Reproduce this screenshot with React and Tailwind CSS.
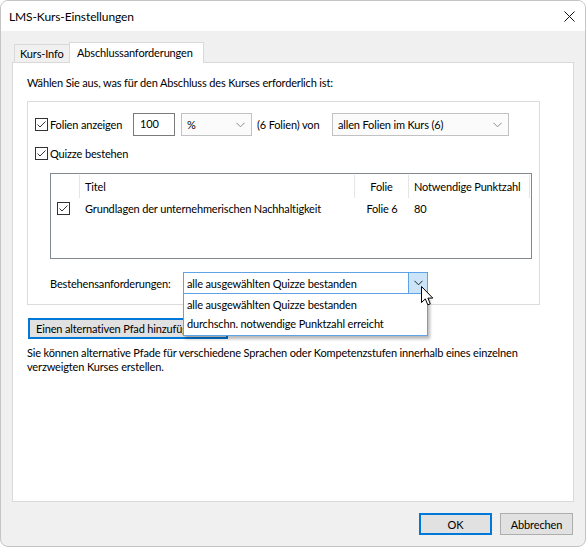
import React from "react";

function Check({ className = "" }) {
  return (
    <span
      className={`w-[13px] h-[13px] border border-[#333333] bg-white flex items-center justify-center shrink-0 ${className}`}
    >
      <svg width="11" height="11" viewBox="0 0 11 11">
        <path d="M1.5 5.5 L4 8 L9.5 2.5" fill="none" stroke="#333333" strokeWidth="1" />
      </svg>
    </span>
  );
}

function Chevron({ color = "#8a8a8a" }) {
  return (
    <svg width="9" height="6" viewBox="0 0 9 6">
      <path d="M0.5 0.8 L4.5 4.8 L8.5 0.8" fill="none" stroke={color} strokeWidth="1" />
    </svg>
  );
}

function Select({ value, width }) {
  return (
    <div
      className={`${width} h-[23px] border border-[#c2c2c2] bg-[#fbfbfb] flex items-center justify-between pl-[5px] pr-[6px]`}
    >
      <span>{value}</span>
      <Chevron />
    </div>
  );
}

export default function App() {
  return (
    <div className="w-[586px] h-[547px] bg-white">
      <div className="w-[586px] h-[547px] rounded-[8px] border border-[#c4c4c4] bg-[#f0f0f0] overflow-hidden flex flex-col relative text-[11px] tracking-[-0.15px] leading-[15px] text-black font-['Lato',sans-serif]">
        {/* Title bar */}
        <div className="h-[30px] bg-white flex items-center justify-between pl-[8px] pr-[10px] shrink-0">
          <span className="text-[12px] tracking-[-0.1px]">LMS-Kurs-Einstellungen</span>
          <svg width="11" height="11" viewBox="0 0 11 11">
            <path d="M0.5 0.5 L10.5 10.5 M10.5 0.5 L0.5 10.5" stroke="#111" strokeWidth="1" />
          </svg>
        </div>

        <div className="flex-1 flex flex-col px-[11px] pt-[11px]">
          {/* Tabs */}
          <div className="flex items-end h-[20px] pl-[2px]">
            <div className="h-[18px] w-[56px] border border-b-0 border-[#d9d9d9] bg-[#f0f0f0] flex items-center pl-[5px]">
              Kurs-Info
            </div>
            <div className="h-[21px] w-[135px] -ml-px -mb-px relative z-10 bg-white border border-b-0 border-[#d9d9d9] flex items-center pl-[7px] pb-[2px]">
              Abschlussanforderungen
            </div>
          </div>

          {/* Panel */}
          <div className="h-[440px] bg-white border border-[#d9d9d9] pl-[14px] pt-[12px] flex flex-col">
            <p>Wählen Sie aus, was für den Abschluss des Kurses erforderlich ist:</p>

            {/* Group box */}
            <div className="mt-[11px] w-[513px] h-[204px] border border-[#dcdcdc] pl-[7px] pt-[11px] flex flex-col">
              <div className="flex items-center h-[23px]">
                <Check />
                <span className="ml-[2px] w-[83px]">Folien anzeigen</span>
                <div className="w-[42px] h-[23px] border border-[#7a7a7a] bg-white pl-[6px] pt-[2px]">100</div>
                <Select value="%" width="ml-[6px] w-[71px]" />
                <span className="ml-[5px] w-[75px]">(6 Folien) von</span>
                <Select value="allen Folien im Kurs (6)" width="w-[177px]" />
              </div>

              <div className="flex items-center h-[16px] mt-[9px]">
                <Check />
                <span className="ml-[2px]">Quizze bestehen</span>
              </div>

              {/* List view */}
              <div className="ml-[15px] mt-[12px] w-[482px] h-[86px] border border-[#828790] bg-white flex flex-col whitespace-nowrap">
                <div className="flex h-[25px] items-stretch">
                  <div className="w-[29px] border-r border-[#e5e5e5] my-[1px]" />
                  <div className="w-[275px] border-r border-[#e5e5e5] pl-[5px] flex items-center my-[1px]">Titel</div>
                  <div className="w-[54px] border-r border-[#e5e5e5] flex items-center justify-center my-[1px]">Folie</div>
                  <div className="w-[121px] border-r border-[#e5e5e5] pl-[5px] flex items-center my-[1px]">Notwendige Punktzahl</div>
                </div>
                <div className="flex h-[18px] items-center">
                  <div className="w-[29px] pl-[6px]">
                    <Check />
                  </div>
                  <div className="w-[275px] pl-[5px]">Grundlagen der unternehmerischen Nachhaltigkeit</div>
                  <div className="w-[54px] text-center">Folie 6</div>
                  <div className="w-[121px] pl-[5px]">80</div>
                </div>
              </div>

              {/* Bestehensanforderungen */}
              <div className="ml-[15px] mt-[13px] flex items-center h-[22px] whitespace-nowrap">
                <span className="w-[133px]">Bestehensanforderungen:</span>
                <div className="relative w-[245px] h-[22px] border border-[#5ea3e6] bg-white flex items-center z-20">
                  <span className="flex-1 pl-[3px]">alle ausgewählten Quizze bestanden</span>
                  <div className="w-[19px] h-full border-l border-[#5ea3e6] bg-[#cce4f7] flex items-center justify-center">
                    <Chevron color="#222" />
                  </div>
                  {/* Dropdown list */}
                  <div className="absolute left-[-1px] top-[21px] w-[245px] h-[42px] bg-white border border-[#5ea3e6] border-t-0 shadow-[2px_3px_3px_rgba(0,0,0,0.28)] flex flex-col pt-[1px]">
                    <div className="h-[19px] flex items-center pl-[3px]">alle ausgewählten Quizze bestanden</div>
                    <div className="h-[19px] flex items-center pl-[3px]">durchschn. notwendige Punktzahl erreicht</div>
                  </div>
                </div>
              </div>
            </div>

            <button className="mt-[13px] ml-[1px] w-[200px] h-[21px] border-2 border-[#0078d7] bg-[#e1e1e1] text-left pl-[6px] leading-[15px] whitespace-nowrap overflow-hidden">
              Einen alternativen Pfad hinzufügen
            </button>

            <p className="mt-[7px] leading-[14px] whitespace-nowrap">
              Sie können alternative Pfade für verschiedene Sprachen oder Kompetenzstufen innerhalb eines einzelnen
              <br />
              verzweigten Kurses erstellen.
            </p>
          </div>

          {/* Footer buttons */}
          <div className="flex justify-end gap-[8px] pt-[11px] pr-[1px]">
            <button className="w-[73px] h-[22px] border-2 border-[#0078d7] bg-[#e1e1e1]">OK</button>
            <button className="w-[73px] h-[22px] border border-[#adadad] bg-[#e1e1e1]">Abbrechen</button>
          </div>
        </div>

        {/* Mouse cursor */}
        <svg className="absolute left-[420px] top-[285px] z-30" width="13" height="20" viewBox="0 0 13 20">
          <path
            d="M0.5 0.5 L0.5 16.5 L4.3 12.9 L6.8 18.8 L9.3 17.8 L6.9 12.1 L11.8 12.1 Z"
            fill="white"
            stroke="black"
            strokeWidth="1"
            strokeLinejoin="miter"
          />
        </svg>
      </div>
    </div>
  );
}
